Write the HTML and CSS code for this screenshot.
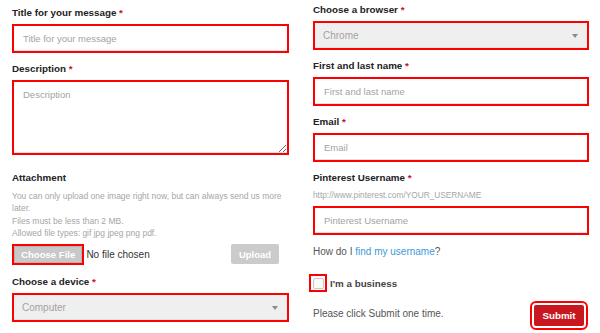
FILE: index.html
```html
<!DOCTYPE html>
<html lang="en">
<head>
    <meta charset="UTF-8">
    <meta name="viewport" content="width=device-width, initial-scale=1.0">
    <title>Contact form</title>
    <link rel="stylesheet" href="styles.css">
</head>
<body>
    <form class="form">
        <div class="col col-left">
            <div class="field">
                <label class="label" for="title">Title for your message <span class="req">*</span></label>
                <input class="input" type="text" id="title" placeholder="Title for your message">
            </div>

            <div class="field">
                <label class="label" for="desc">Description <span class="req">*</span></label>
                <textarea class="input textarea" id="desc" placeholder="Description"></textarea>
            </div>

            <div class="field attach">
                <div class="label">Attachment</div>
                <div class="help">
                    You can only upload one image right now, but can always send us more later.<br>
                    Files must be less than 2 MB.<br>
                    Allowed file types: gif jpg jpeg png pdf.
                </div>
                <div class="file-row">
                    <span class="file-pick">
                        <button type="button" class="file-btn">Choose File</button>
                        <span class="file-name">No file chosen</span>
                    </span>
                    <button type="button" class="upload-btn">Upload</button>
                </div>
            </div>

            <div class="field device">
                <label class="label" for="device">Choose a device <span class="req">*</span></label>
                <div class="select-wrap">
                    <select class="input select" id="device">
                        <option>Computer</option>
                    </select>
                </div>
            </div>
        </div>

        <div class="col col-right">
            <div class="field">
                <label class="label" for="browser">Choose a browser <span class="req">*</span></label>
                <div class="select-wrap">
                    <select class="input select" id="browser">
                        <option>Chrome</option>
                    </select>
                </div>
            </div>

            <div class="field">
                <label class="label" for="name">First and last name <span class="req">*</span></label>
                <input class="input" type="text" id="name" placeholder="First and last name">
            </div>

            <div class="field">
                <label class="label" for="email">Email <span class="req">*</span></label>
                <input class="input" type="text" id="email" placeholder="Email">
            </div>

            <div class="field pinterest">
                <label class="label" for="pin">Pinterest Username <span class="req">*</span></label>
                <div class="help url">http://www.pinterest.com/YOUR_USERNAME</div>
                <input class="input" type="text" id="pin" placeholder="Pinterest Username">
            </div>

            <p class="find">How do I <a href="#">find my username</a>?</p>

            <label class="business">
                <span class="check-wrap"><span class="check"></span></span>
                <span class="business-text">I'm a business</span>
            </label>

            <div class="submit-row">
                <span class="submit-note">Please click Submit one time.</span>
                <button type="button" class="submit">Submit</button>
            </div>
        </div>
    </form>
</body>
</html>
```

FILE: styles.css
```css
body {
    margin: 0;
    padding: 0 11px 0 12px;
    background: #fff;
    font-family: 'Liberation Sans', Arial, sans-serif;
    color: #222;
}
.form {
    display: grid;
    grid-template-columns: 277px 276px;
    column-gap: 24px;
}
.col {
    display: flex;
    flex-direction: column;
}
.col-left {
    padding-top: 4px;
}
.col-right {
    padding-top: 1px;
}
.field {
    margin-bottom: 7px;
}
.label {
    display: block;
    font-size: 9.8px;
    font-weight: bold;
    line-height: 18px;
    margin-bottom: 2px;
    color: #222;
}
.req {
    color: #c8102e;
}
.input {
    display: block;
    box-sizing: border-box;
    width: 100%;
    height: 29px;
    margin: 0;
    padding: 0 9px;
    border: 2px solid #f00;
    border-radius: 0;
    background: #fff;
    box-shadow: inset 0 -1px 0 #dde6ea;
    font-family: 'Liberation Sans', Arial, sans-serif;
    font-size: 9.5px;
    color: #333;
    outline: none;
}
.input::placeholder {
    color: #a3a3a3;
}
.textarea {
    height: 75px;
    margin-top: 1px;
    padding-top: 7px;
    resize: vertical;
}
.attach {
    margin-top: 7px;
}
.help {
    font-size: 8.5px;
    line-height: 12.4px;
    color: #a6a6a6;
    margin-top: 3px;
}
.file-row {
    display: flex;
    align-items: center;
    justify-content: space-between;
    margin-top: 4px;
    padding-right: 10px;
}
.file-pick {
    display: flex;
    align-items: center;
}
.file-btn {
    box-sizing: border-box;
    height: 21px;
    padding: 0 7px;
    border: 2px solid #f00;
    background: #c8c8c8;
    box-shadow: inset 0 0 0 1px #b5b5b5;
    color: #fff;
    font-family: 'Liberation Sans', Arial, sans-serif;
    font-size: 9.6px;
    font-weight: bold;
}
.file-name {
    margin-left: 2px;
    font-size: 10px;
    color: #333;
}
.upload-btn {
    box-sizing: border-box;
    width: 48px;
    height: 20px;
    border: 0;
    border-radius: 2px;
    background: #cbcbcb;
    color: #fff;
    font-family: 'Liberation Sans', Arial, sans-serif;
    font-size: 9.5px;
    font-weight: bold;
}
.device {
    margin-top: 1px;
}
.select-wrap {
    position: relative;
}
.select-wrap::after {
    content: "";
    position: absolute;
    right: 11px;
    top: 13px;
    border-left: 3.5px solid transparent;
    border-right: 3.5px solid transparent;
    border-top: 4px solid #8a8a8a;
}
.select {
    appearance: none;
    -webkit-appearance: none;
    background: #efefef;
    color: #a3a3a3;
    font-size: 10px;
    padding-left: 8px;
}
.pinterest .help {
    line-height: 12px;
    margin: 0 0 5px;
}
.url {
    font-size: 8.3px;
}
.find {
    margin: 3px 0 0;
    font-size: 10px;
    line-height: 14px;
    color: #555;
}
.find a {
    color: #3a9ad9;
    text-decoration: none;
}
.business {
    display: flex;
    align-items: center;
    margin-top: 15px;
    margin-left: -4px;
}
.check-wrap {
    box-sizing: border-box;
    width: 18px;
    height: 18px;
    border: 2px solid #f00;
    display: flex;
    align-items: center;
    justify-content: center;
}
.check {
    box-sizing: border-box;
    width: 11px;
    height: 11px;
    border: 1px solid #c9c9c9;
    border-radius: 2px;
    background: #fafafa;
}
.business-text {
    margin-left: 3px;
    font-size: 9.8px;
    font-weight: bold;
    color: #444;
}
.submit-row {
    display: flex;
    align-items: center;
    justify-content: space-between;
    margin-top: 9px;
}
.submit-note {
    font-size: 10px;
    color: #555;
    margin-bottom: 5px;
}
.submit {
    box-sizing: border-box;
    width: 50px;
    height: 21px;
    margin: 4px 5px 4px 0;
    border: 0;
    border-radius: 2px;
    background: #c8171f;
    color: #fff;
    font-family: 'Liberation Sans', Arial, sans-serif;
    font-size: 9.8px;
    font-weight: bold;
    outline: 2px solid #f00;
    outline-offset: 2px;
}
```
